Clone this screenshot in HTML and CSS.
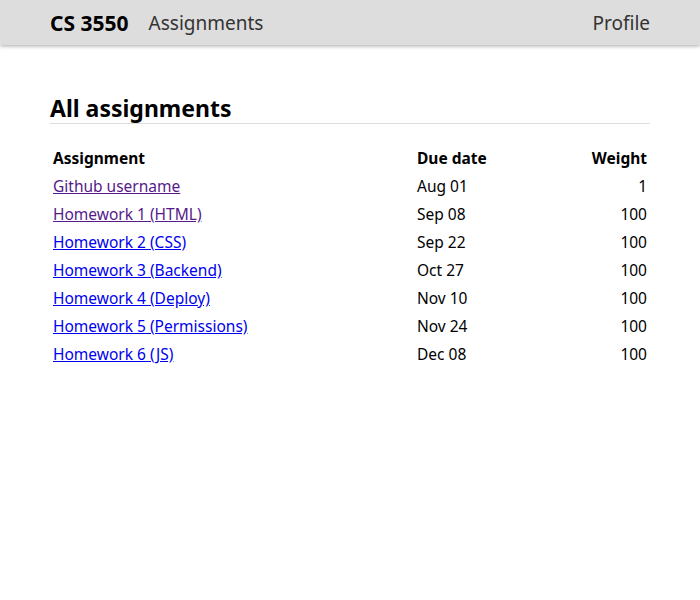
FILE: index.html
```html
<!DOCTYPE html>
<html lang="en">
<head>
<meta charset="utf-8">
<title>CS 3550 Assignments</title>
<link rel="stylesheet" href="styles.css">
</head>
<body>
<header class="topbar">
  <nav class="topbar-inner">
    <a class="brand" href="#">CS 3550</a>
    <a class="nav-link" href="#">Assignments</a>
    <a class="nav-link profile" href="#">Profile</a>
  </nav>
</header>
<main class="content">
  <h1 class="title">All assignments</h1>
  <table class="assignments">
    <thead>
      <tr><th>Assignment</th><th>Due date</th><th class="num">Weight</th></tr>
    </thead>
    <tbody>
      <tr><td><a class="visited" href="#">Github username</a></td><td>Aug 01</td><td class="num">1</td></tr>
      <tr><td><a class="visited" href="#">Homework 1 (HTML)</a></td><td>Sep 08</td><td class="num">100</td></tr>
      <tr><td><a href="#">Homework 2 (CSS)</a></td><td>Sep 22</td><td class="num">100</td></tr>
      <tr><td><a href="#">Homework 3 (Backend)</a></td><td>Oct 27</td><td class="num">100</td></tr>
      <tr><td><a href="#">Homework 4 (Deploy)</a></td><td>Nov 10</td><td class="num">100</td></tr>
      <tr><td><a href="#">Homework 5 (Permissions)</a></td><td>Nov 24</td><td class="num">100</td></tr>
      <tr><td><a href="#">Homework 6 (JS)</a></td><td>Dec 08</td><td class="num">100</td></tr>
    </tbody>
  </table>
</main>
</body>
</html>
```
FILE: styles.css
```css
* { box-sizing: border-box; }
body {
  margin: 0;
  font-family: "Noto Sans", "Open Sans", sans-serif;
  font-size: 16px;
  color: #000;
  background: #fff;
}
.topbar {
  background: #ddd;
  box-shadow: 0 1px 4px rgba(0,0,0,0.35);
  height: 45px;
}
.topbar-inner {
  max-width: 600px;
  margin: 0 auto;
  height: 45px;
  display: flex;
  align-items: center;
  gap: 20px;
}
.topbar-inner a { text-decoration: none; }
.brand { font-weight: 700; color: #000; font-size: 21px; }
.nav-link { color: #333; font-size: 19px; }
.profile { margin-left: auto; }
.content {
  max-width: 600px;
  margin: 0 auto;
  padding-top: 50px;
}
.title {
  font-size: 23px;
  font-weight: 700;
  margin: 0 0 20px;
  padding-bottom: 1px;
  border-bottom: 1px solid #ddd;
  line-height: 27px;
}
.assignments {
  width: 100%;
  border-collapse: collapse;
}
.assignments th, .assignments td {
  text-align: left;
  padding: 3px;
  height: 28px;
  font-size: 15.5px;
}
.assignments th { font-weight: 700; }
.assignments th:first-child { width: 364px; }
.assignments .num { text-align: right; }
.assignments a { color: #0000ee; }
.assignments a.visited { color: #551a8b; }
```
